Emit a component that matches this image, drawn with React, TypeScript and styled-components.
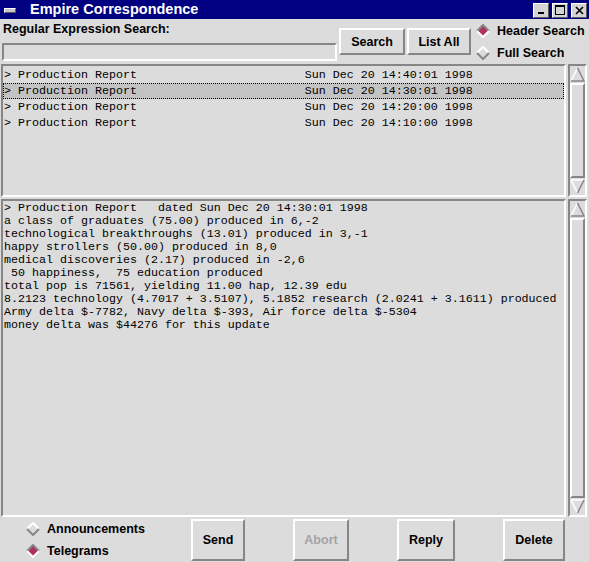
import React from "react";
import styled, { createGlobalStyle } from "styled-components";

const BG = "#dcdcdc";
const DARK = "#868686";
const LIGHT = "#ffffff";
const MAROON = "#b03060";

const Global = createGlobalStyle`
  html, body { margin: 0; padding: 0; background: ${BG}; }
  body { width: 589px; height: 562px; overflow: hidden; }
`;

const Window = styled.div`
  width: 589px;
  height: 562px;
  background: ${BG};
  display: flex;
  flex-direction: column;
  overflow: hidden;
  font-family: "Liberation Sans", Arial, sans-serif;
  color: #000;
`;

const TitleBar = styled.div`
  flex: none;
  height: 19px;
  background: #000080;
  display: flex;
  align-items: center;
  padding: 0 2px 0 4px;
`;

const MenuKnob = styled.div`
  width: 10px;
  height: 3px;
  background: #c8c8c8;
  border-top: 1px solid ${LIGHT};
  border-left: 1px solid ${LIGHT};
  border-bottom: 1px solid #5a5a5a;
  border-right: 1px solid #5a5a5a;
  margin-top: 1px;
`;

const Title = styled.div`
  margin-left: 14px;
  color: #fff;
  font-weight: bold;
  font-size: 14.5px;
  line-height: 17px;
`;

const TitleButtons = styled.div`
  margin-left: auto;
  display: flex;
  gap: 3px;
  margin-top: 1px;
`;

const TitleButton = styled.div`
  width: 14px;
  height: 13px;
  background: #d4d4d4;
  border-top: 1px solid ${LIGHT};
  border-left: 1px solid ${LIGHT};
  border-bottom: 1px solid #5a5a5a;
  border-right: 1px solid #5a5a5a;
  display: flex;
  align-items: center;
  justify-content: center;
`;

const TopSection = styled.div`
  flex: none;
  height: 45px;
  display: flex;
  padding-left: 2px;
`;

const SearchColumn = styled.div`
  width: 335px;
  display: flex;
  flex-direction: column;
  padding-top: 2px;
`;

const Label = styled.div`
  font-weight: bold;
  font-size: 12.5px;
  line-height: 16px;
  padding-left: 1px;
`;

const Entry = styled.div`
  margin-top: 6px;
  height: 14px;
  border-top: 2px solid ${DARK};
  border-left: 2px solid ${DARK};
  border-bottom: 2px solid ${LIGHT};
  border-right: 2px solid ${LIGHT};
  background: ${BG};
`;

const Raised = styled.button<{ $w: number; $h: number; $disabled?: boolean }>`
  box-sizing: border-box;
  width: ${(p) => p.$w}px;
  height: ${(p) => p.$h}px;
  padding: 0;
  margin: 0;
  background: ${BG};
  border-top: 2px solid ${LIGHT};
  border-left: 2px solid ${LIGHT};
  border-bottom: 2px solid ${DARK};
  border-right: 2px solid ${DARK};
  font-family: "Liberation Sans", Arial, sans-serif;
  font-weight: bold;
  font-size: 12.5px;
  color: ${(p) => (p.$disabled ? "#a3a3a3" : "#000")};
  display: flex;
  align-items: center;
  justify-content: center;
  flex: none;
`;

const TopButtons = styled.div`
  display: flex;
  gap: 2px;
  margin-left: 2px;
  padding-top: 9px;
`;

const RadioColumn = styled.div`
  display: flex;
  flex-direction: column;
  margin-left: 5px;
  padding-top: 1px;
`;

const RadioRow = styled.div<{ $h: number }>`
  height: ${(p) => p.$h}px;
  display: flex;
  align-items: center;
  gap: 7px;
  font-weight: bold;
  font-size: 12.5px;
  white-space: nowrap;
`;

const Pane = styled.div<{ $h: number; $mt: number }>`
  flex: none;
  height: ${(p) => p.$h}px;
  margin-top: ${(p) => p.$mt}px;
  display: flex;
  padding-left: 1px;
`;

const Sunken = styled.div`
  box-sizing: border-box;
  width: 565px;
  height: 100%;
  border-top: 2px solid ${DARK};
  border-left: 2px solid ${DARK};
  border-bottom: 2px solid ${LIGHT};
  border-right: 2px solid ${LIGHT};
  background: ${BG};
  overflow: hidden;
  font-family: "Liberation Mono", "Courier New", monospace;
  font-size: 11.67px;
  white-space: pre;
`;

const ListBody = styled(Sunken)`
  padding-top: 1px;
`;

const ListRow = styled.div<{ $selected?: boolean }>`
  box-sizing: border-box;
  height: 16px;
  line-height: 16px;
  padding-left: 1px;
  background: ${(p) => (p.$selected ? "#c3c3c3" : "transparent")};
  outline: ${(p) => (p.$selected ? "1px dotted #000" : "none")};
  outline-offset: -1px;
`;

const TextBody = styled(Sunken)`
  padding: 1px 0 0 1px;
  line-height: 13px;
`;

const ScrollBar = styled.div`
  box-sizing: border-box;
  width: 19px;
  height: 100%;
  margin-left: 2px;
  border-top: 2px solid ${DARK};
  border-left: 2px solid ${DARK};
  border-bottom: 2px solid ${LIGHT};
  border-right: 2px solid ${LIGHT};
  display: flex;
  flex-direction: column;
  align-items: center;
  padding: 1px 0;
`;

const Slider = styled.div`
  box-sizing: border-box;
  flex: 1;
  width: 15px;
  border-top: 2px solid ${LIGHT};
  border-left: 2px solid ${LIGHT};
  border-bottom: 2px solid ${DARK};
  border-right: 2px solid ${DARK};
  margin: 1px 0;
`;

const Bottom = styled.div`
  flex: none;
  height: 45px;
  display: flex;
  align-items: flex-start;
`;

const BottomRadios = styled.div`
  width: 165px;
  padding-left: 26px;
  padding-top: 1px;
  display: flex;
  flex-direction: column;
`;

const BottomButtons = styled.div`
  display: flex;
  gap: 48px;
  padding-top: 2px;
`;

const Diamond = ({ on }: { on?: boolean }) => (
  <svg width="14" height="14" viewBox="0 0 14 14" style={{ flex: "none" }}>
    <polygon points="7,1 13,7 7,13 1,7" fill={on ? MAROON : BG} />
    <polyline points="1,7 7,1 13,7" fill="none" stroke={on ? DARK : LIGHT} strokeWidth="2" />
    <polyline points="1,7 7,13 13,7" fill="none" stroke={on ? LIGHT : DARK} strokeWidth="2" />
  </svg>
);

const Arrow = ({ down }: { down?: boolean }) => (
  <svg width="15" height="15" viewBox="0 0 15 15" style={{ flex: "none" }}>
    {down ? (
      <>
        <polygon points="1,1 14,1 7.5,14" fill={BG} />
        <polyline points="1,1 14,1" fill="none" stroke={LIGHT} strokeWidth="1.5" />
        <polyline points="1,1 7.5,14" fill="none" stroke={LIGHT} strokeWidth="1.5" />
        <polyline points="14,1 7.5,14" fill="none" stroke={DARK} strokeWidth="1.5" />
      </>
    ) : (
      <>
        <polygon points="7.5,1 14,14 1,14" fill={BG} />
        <polyline points="7.5,1 1,14" fill="none" stroke={LIGHT} strokeWidth="1.5" />
        <polyline points="7.5,1 14,14 1,14" fill="none" stroke={DARK} strokeWidth="1.5" />
      </>
    )}
  </svg>
);

const Scroll = () => (
  <ScrollBar>
    <Arrow />
    <Slider />
    <Arrow down />
  </ScrollBar>
);

const pad = (s: string, n: number) => s + " ".repeat(Math.max(0, n - s.length));

const rows = [
  "Sun Dec 20 14:40:01 1998",
  "Sun Dec 20 14:30:01 1998",
  "Sun Dec 20 14:20:00 1998",
  "Sun Dec 20 14:10:00 1998",
];

const textLines = [
  "> Production Report   dated Sun Dec 20 14:30:01 1998",
  "a class of graduates (75.00) produced in 6,-2",
  "technological breakthroughs (13.01) produced in 3,-1",
  "happy strollers (50.00) produced in 8,0",
  "medical discoveries (2.17) produced in -2,6",
  " 50 happiness,  75 education produced",
  "total pop is 71561, yielding 11.00 hap, 12.39 edu",
  "8.2123 technology (4.7017 + 3.5107), 5.1852 research (2.0241 + 3.1611) produced",
  "Army delta $-7782, Navy delta $-393, Air force delta $-5304",
  "money delta was $44276 for this update",
];

export default function App() {
  return (
    <>
      <Global />
      <Window>
        <TitleBar>
          <MenuKnob />
          <Title>Empire Correspondence</Title>
          <TitleButtons>
            <TitleButton>
              <svg width="8" height="8" viewBox="0 0 8 8">
                <rect x="1" y="6" width="6" height="2" fill="#000" />
              </svg>
            </TitleButton>
            <TitleButton>
              <svg width="10" height="10" viewBox="0 0 10 10">
                <rect x="0.5" y="0.5" width="9" height="9" fill="none" stroke="#000" strokeWidth="1" />
                <rect x="0" y="0" width="10" height="2" fill="#000" />
              </svg>
            </TitleButton>
            <TitleButton>
              <svg width="9" height="9" viewBox="0 0 9 9">
                <path d="M1 1 L8 8 M8 1 L1 8" stroke="#000" strokeWidth="1.6" />
              </svg>
            </TitleButton>
          </TitleButtons>
        </TitleBar>

        <TopSection>
          <SearchColumn>
            <Label>Regular Expression Search:</Label>
            <Entry />
          </SearchColumn>
          <TopButtons>
            <Raised $w={66} $h={27}>Search</Raised>
            <Raised $w={64} $h={27}>List All</Raised>
          </TopButtons>
          <RadioColumn>
            <RadioRow $h={22}>
              <Diamond on />
              Header Search
            </RadioRow>
            <RadioRow $h={22}>
              <Diamond />
              Full Search
            </RadioRow>
          </RadioColumn>
        </TopSection>

        <Pane $h={133} $mt={0}>
          <ListBody>
            {rows.map((d, i) => (
              <ListRow key={i} $selected={i === 1}>
                {pad("> Production Report", 43) + d}
              </ListRow>
            ))}
          </ListBody>
          <Scroll />
        </Pane>

        <Pane $h={318} $mt={2}>
          <TextBody>
            {textLines.map((l, i) => (
              <div key={i}>{l}</div>
            ))}
          </TextBody>
          <Scroll />
        </Pane>

        <Bottom>
          <BottomRadios>
            <RadioRow $h={22}>
              <Diamond />
              Announcements
            </RadioRow>
            <RadioRow $h={22}>
              <Diamond on />
              Telegrams
            </RadioRow>
          </BottomRadios>
          <BottomButtons>
            <Raised $w={54} $h={42}>Send</Raised>
            <Raised $w={56} $h={42} $disabled>Abort</Raised>
            <Raised $w={58} $h={42}>Reply</Raised>
            <Raised $w={62} $h={42}>Delete</Raised>
          </BottomButtons>
        </Bottom>
      </Window>
    </>
  );
}
